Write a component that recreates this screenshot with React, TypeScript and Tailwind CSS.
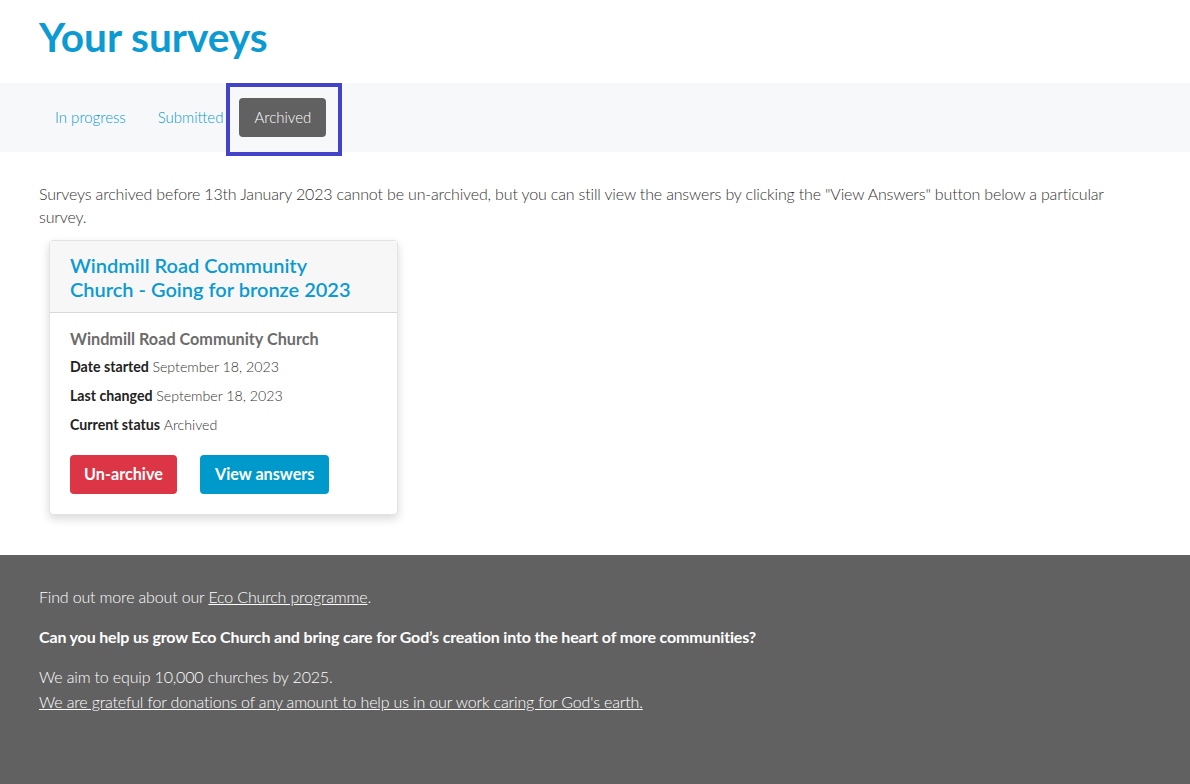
export default function App() {
  return (
    <div className="min-h-screen flex flex-col bg-white text-[#333] font-['Lato','Noto_Sans',sans-serif]">
      <div className="px-[39px] pt-[13px] pb-[22px]">
        <h1 className="text-[40.6px] leading-[48px] font-bold text-[#0b9ad2]">Your surveys</h1>
      </div>

      {/* tabs */}
      <div className="bg-[#f7f8fa] h-[69px] flex items-center pl-[39px]">
        <nav className="flex items-center text-[15px] font-light">
          <a className="px-4 py-2 text-[#0b9ad2]">In progress</a>
          <a className="px-4 py-2 text-[#0b9ad2]">Submitted</a>
          <div className="relative">
            <span className="block px-[15px] h-[39px] leading-[39px] rounded bg-[#616161] text-white">Archived</span>
            <div className="absolute left-[-13px] right-[-16px] top-[-15px] bottom-[-19px] border-4 border-[#4343c9] pointer-events-none" />
          </div>
        </nav>
      </div>

      <main className="px-[39px] pt-[30px] pb-[40px]">
        <p className="text-[16px] leading-[23px] font-light text-[#333] tracking-[-0.16px]">
          Surveys archived before 13th January 2023 cannot be un-archived, but you can still view the answers by clicking the "View Answers" button below a particular survey.
        </p>

        <div className="mt-[12px] ml-[10px] w-[349px] rounded border border-[#e3e3e3] bg-white shadow-[0_4px_10px_rgba(0,0,0,0.15)]">
          <div className="bg-[#f7f7f7] border-b border-[#d9d9d9] px-5 pt-[12px] pb-[11px]">
            <h2 className="max-w-[290px] text-[20px] leading-[24px] font-semibold text-[#0b9ad2]">
              Windmill Road Community Church - Going for bronze 2023
            </h2>
          </div>
          <div className="px-5 pt-[16px] pb-[20px]">
            <h3 className="text-[16.2px] leading-[20px] font-bold text-[#6c6c6c]">Windmill Road Community Church</h3>
            <div className="mt-[8px] flex flex-col gap-[9px] text-[14.2px] leading-[20px]">
              <p><span className="font-bold text-[#222]">Date started</span> <span className="font-light">September 18, 2023</span></p>
              <p><span className="font-bold text-[#222]">Last changed</span> <span className="font-light">September 18, 2023</span></p>
              <p><span className="font-bold text-[#222]">Current status</span> <span className="font-light">Archived</span></p>
            </div>
            <div className="mt-[20px] flex gap-[23px]">
              <button className="h-[39px] px-[14px] rounded bg-[#dc3545] text-white font-bold text-[16.2px]">Un-archive</button>
              <button className="h-[39px] px-[15px] rounded bg-[#0099cc] text-white font-bold text-[16.2px]">View answers</button>
            </div>
          </div>
        </div>
      </main>

      <footer className="flex-1 bg-[#616161] text-white px-[39px] pt-[29px] pb-[70px] text-[16px] leading-[25px] tracking-[-0.16px]">
        <p className="font-light">
          Find out more about our <a className="underline">Eco Church programme</a>.
        </p>
        <p className="mt-[15px] font-bold">
          Can you help us grow Eco Church and bring care for God’s creation into the heart of more communities?
        </p>
        <p className="mt-[15px] font-light">We aim to equip 10,000 churches by 2025.</p>
        <p className="font-light">
          <a className="underline">We are grateful for donations of any amount to help us in our work caring for God's earth.</a>
        </p>
      </footer>
    </div>
  )
}
